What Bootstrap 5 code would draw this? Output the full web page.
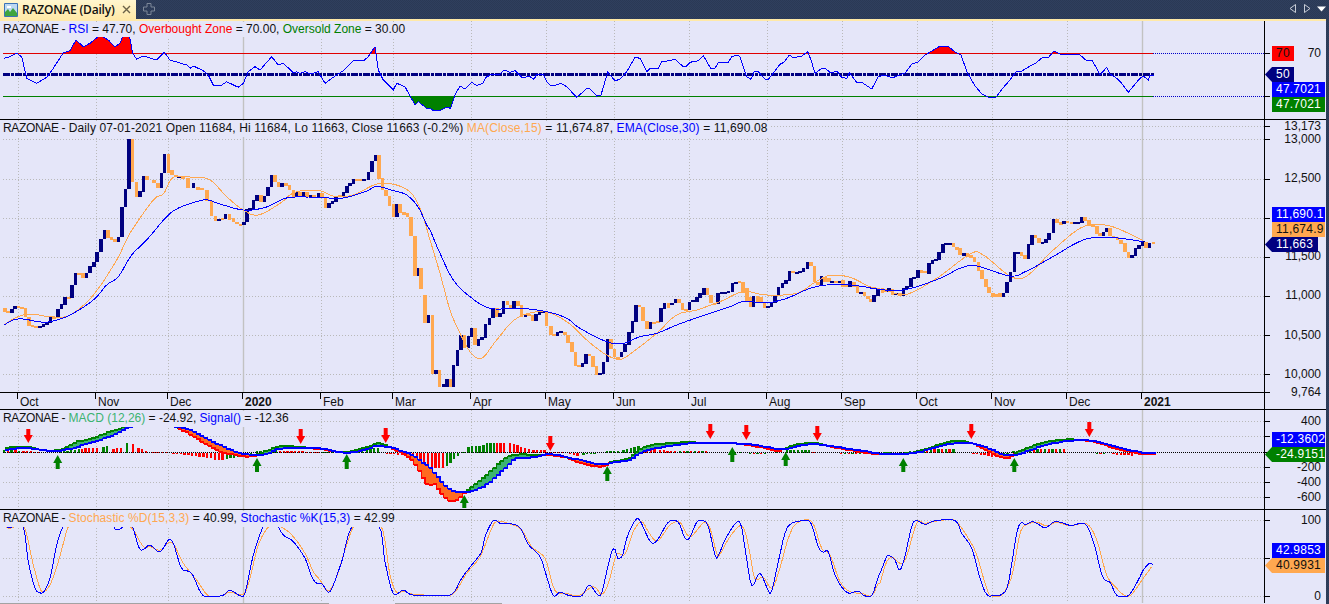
<!DOCTYPE html>
<html lang="en">
<head>
<meta charset="utf-8">
<title>RAZONAE (Daily)</title>
<link href="https://cdn.jsdelivr.net/npm/bootstrap@5.3.0/dist/css/bootstrap.min.css" rel="stylesheet">
<style>
html,body{height:604px;overflow:hidden;margin:0}
body{background:repeating-conic-gradient(#2f3f5e 0 25%,#2b3955 0 50%) 0 0/2px 2px;font-family:"Liberation Sans",Arial,sans-serif;font-size:12px;color:#111}
.topbar{height:19px}
.chart-tab{width:136px;background:linear-gradient(#fff6cf,#ffe9a8);color:#111;font:600 12px/19px "Open Sans",sans-serif;padding-left:4px}
.tab-name{margin-left:4px;margin-right:7px;letter-spacing:-.2px}
.add-tab{margin-left:7px;margin-top:3px}
.win-btns{margin-right:3px;gap:6px}
.cream{height:2px;background:#ffe9a8;width:1326px}
.stack{width:1326px;background:#e5e6f9}
.pane{border-bottom:1px solid #000}
.pane-rsi{height:99px}.pane-main{height:290px}.pane-macd{height:100px}.pane-stoch{height:93px;border-bottom:0}
.plot-col{width:1264px}
.plot-svg{display:block;width:1264px}
.axis-col{width:62px;border-left:1px solid #000}
.axis-ticks{position:absolute;left:0;top:0;width:61px;height:100%}
.legend-box{position:absolute;left:3px;top:1px;background:#e5e6f9;line-height:15px;height:16px;white-space:nowrap;padding-right:1px}
.pane-rsi .legend-box{height:15px}
.pane-main .legend-box{letter-spacing:.137px}
.pane-stoch .legend-box{letter-spacing:.066px}
.sym-name{letter-spacing:-.35px}
.c-blue{color:#0000ff}.c-red{color:#ff0000}.c-green{color:#008000}.c-orange{color:#ffa850}.c-sea{color:#3cb371}
.time-axis{height:17px;border-top:1px solid #000}
.month-tick{position:absolute;top:0;height:16px;line-height:18px;padding-left:2px}
.month-tick::before{content:"";position:absolute;left:-1px;top:0;height:6px;width:1px;background:#000}
.year-tick{font-weight:700}
.axis-label{position:absolute;right:5px;line-height:14px;height:14px;text-align:right;white-space:nowrap}
.val-tag{position:absolute;left:7px;width:53px;height:15px;line-height:15px;padding-left:4px;white-space:nowrap;letter-spacing:.22px}
.val-arrow{left:0;width:60px;padding-left:11px;clip-path:polygon(0 50%,7px 0,100% 0,100% 100%,7px 100%)}
.t-red{background:#ff0000;color:#111}.t-navy{background:#000080;color:#fff}.t-blue{background:#0000ff;color:#fff}
.t-green{background:#008000;color:#fff}.t-orange{background:#ffa850;color:#111}
.w-small{width:22px}.w-navy50{width:29px}.w-navy{width:53px}
.scroll-strip{height:1px;width:1326px;background:#e5e6f9}
.scroll-strip span{display:block;background:#a3a3a3}
.s1{width:329px}.s2{width:107px;margin-left:66px}
</style>
</head>
<body>
<div class="topbar d-flex align-items-start">
  <div class="chart-tab d-flex align-items-center">
    <svg width="14" height="14" viewBox="0 0 14 14"><rect width="14" height="14" rx="1" fill="#3b73b8"/><rect x="1" y="1" width="12" height="12" fill="#bcd8f2"/><path d="M3 3h4v2H3z" fill="#fff"/><path d="M1 13V9l3-3 2 3 3-4 4 5v3z" fill="#3fa53f"/></svg>
    <span class="tab-name">RAZONAE (Daily)</span>
    <svg width="9" height="9" viewBox="0 0 9 9"><path d="M1 1l7 7M8 1L1 8" stroke="#6b6248" stroke-width="1.4" fill="none"/></svg>
  </div>
  <svg class="add-tab" width="12" height="12" viewBox="0 0 12 12"><path d="M4 .5h4v3.5h3.5v4H8v3.5H4V8H.5V4H4z" fill="none" stroke="#7c8798" stroke-linejoin="round"/></svg>
  <div class="win-btns d-flex ms-auto align-items-center mt-1">
    <svg width="8" height="9" viewBox="0 0 8 9"><path d="M6.5.5v8L1 4.5z" fill="none" stroke="#c7ccd6"/></svg>
    <svg width="8" height="9" viewBox="0 0 8 9"><path d="M1.500.5v8L7 4.500z" fill="none" stroke="#c7ccd6"/></svg>
    <svg width="9" height="7" viewBox="0 0 9 7"><path d="M0 1.500h9L4.500 6.500z" fill="#fff"/></svg>
  </div>
</div>
<div class="cream"></div>
<div class="stack d-flex flex-column">
  <section class="pane pane-rsi d-flex">
    <div class="plot-col position-relative">
      <svg class="plot-svg" id="svgRsi" height="98" viewBox="0 21 1264 98"></svg>
      <div class="legend-box"><span class="sym-name">RAZONAE -</span> <span class="c-blue">RSI</span> = 47.70, <span class="c-red">Overbought Zone</span> = 70.00, <span class="c-green">Oversold Zone</span> = 30.00</div>
    </div>
    <div class="axis-col position-relative">
      <svg class="axis-ticks" data-ticks="53,96" data-top="21"></svg>
      <div class="val-tag t-red w-small" style="top:25px">70</div>
      <div class="axis-label" style="top:25px">70</div>
      <div class="val-tag val-arrow t-navy w-navy50" style="top:46px">50</div>
      <div class="val-tag t-blue" style="top:61px">47.7021</div>
      <div class="val-tag t-green" style="top:76px">47.7021</div>
    </div>
  </section>
  <section class="pane pane-main d-flex">
    <div class="plot-col position-relative d-flex flex-column">
      <svg class="plot-svg" id="svgMain" height="272" viewBox="0 120 1264 272"></svg>
      <div class="legend-box"><span class="sym-name">RAZONAE -</span> Daily 07-01-2021 Open 11684, Hi 11684, Lo 11663, Close 11663 (-0.2%) <span class="c-orange">MA(Close,15)</span> = 11,674.87, <span class="c-blue">EMA(Close,30)</span> = 11,690.08</div>
      <div class="time-axis position-relative">
        <span class="month-tick" style="left:18px">Oct</span><span class="month-tick" style="left:96px">Nov</span><span class="month-tick" style="left:168px">Dec</span><span class="month-tick year-tick" style="left:243px">2020</span><span class="month-tick" style="left:321px">Feb</span><span class="month-tick" style="left:393px">Mar</span><span class="month-tick" style="left:471px">Apr</span><span class="month-tick" style="left:546px">May</span><span class="month-tick" style="left:614px">Jun</span><span class="month-tick" style="left:689px">Jul</span><span class="month-tick" style="left:767px">Aug</span><span class="month-tick" style="left:842px">Sep</span><span class="month-tick" style="left:917px">Oct</span><span class="month-tick" style="left:992px">Nov</span><span class="month-tick" style="left:1067px">Dec</span><span class="month-tick year-tick" style="left:1142px">2021</span>
      </div>
    </div>
    <div class="axis-col position-relative">
      <svg class="axis-ticks" data-ticks="126,139,179,218,257,296,335,374,392" data-top="120"></svg>
      <div class="axis-label" style="top:-1px">13,173</div>
      <div class="axis-label" style="top:12px">13,000</div>
      <div class="axis-label" style="top:51px">12,500</div>
      <div class="axis-label" style="top:129px">11,500</div>
      <div class="axis-label" style="top:168px">11,000</div>
      <div class="axis-label" style="top:208px">10,500</div>
      <div class="axis-label" style="top:247px">10,000</div>
      <div class="axis-label" style="top:265px">9,764</div>
      <div class="val-tag t-blue" style="top:87px">11,690.1</div>
      <div class="val-tag t-orange" style="top:102px">11,674.9</div>
      <div class="val-tag val-arrow t-navy w-navy" style="top:117px">11,663</div>
    </div>
  </section>
  <section class="pane pane-macd d-flex">
    <div class="plot-col position-relative">
      <svg class="plot-svg" id="svgMacd" height="99" viewBox="0 410 1264 99"></svg>
      <div class="legend-box"><span class="sym-name">RAZONAE -</span> <span class="c-sea">MACD (12,26)</span> = -24.92, <span class="c-blue">Signal()</span> = -12.36</div>
    </div>
    <div class="axis-col position-relative">
      <svg class="axis-ticks" data-ticks="421,436,452,467,482,497" data-top="410"></svg>
      <div class="axis-label" style="top:4px">400</div>
      <div class="axis-label" style="top:50px">-200</div>
      <div class="axis-label" style="top:65px">-400</div>
      <div class="axis-label" style="top:80px">-600</div>
      <div class="val-tag t-blue" style="top:22px">-12.3602</div>
      <div class="val-tag val-arrow t-green" style="top:37px">-24.9151</div>
    </div>
  </section>
  <section class="pane pane-stoch d-flex">
    <div class="plot-col position-relative">
      <svg class="plot-svg" id="svgStoch" height="93" viewBox="0 510 1264 93"></svg>
      <div class="legend-box"><span class="sym-name">RAZONAE -</span> <span class="c-orange">Stochastic %D(15,3,3)</span> = 40.99, <span class="c-blue">Stochastic %K(15,3)</span> = 42.99</div>
    </div>
    <div class="axis-col position-relative">
      <svg class="axis-ticks" data-ticks="520,558,596" data-top="510"></svg>
      <div class="axis-label" style="top:3px">100</div>
      <div class="axis-label" style="top:79px">0</div>
      <div class="val-tag t-blue" style="top:33px">42.9853</div>
      <div class="val-tag val-arrow t-orange" style="top:48px">40.9931</div>
    </div>
  </section>
  <div class="scroll-strip d-flex"><span class="s1"></span><span class="s2"></span></div>
</div>
<script src="https://cdn.jsdelivr.net/npm/bootstrap@5.3.0/dist/js/bootstrap.bundle.min.js"></script>
<script>
const NAVY='#000080',ORANGE='#ffa850',BLUE='#0000ff';
const P=(s,ox,oy)=>s.trim().split(/\s+/).map(t=>{const[x,y]=t.split(',').map(Number);return[ox+x/3,oy+y/3]});
const path=p=>p.map(a=>a[0].toFixed(1)+','+a[1].toFixed(1)).join(' ');
const line=(p,c,w=1)=>`<polyline points="${path(p)}" fill="none" stroke="${c}" stroke-width="${w}" shape-rendering="crispEdges"/>`;
const smooth=(p,yMin=-1e9,yMax=1e9)=>{const out=[];for(let i=0;i<p.length-1;i++){const a=p[i-1]||p[i],b=p[i],c=p[i+1],d=p[i+2]||c;const n=Math.max(1,Math.ceil((c[0]-b[0])/2));
 for(let k=0;k<n;k++){const t=k/n,t2=t*t,t3=t2*t,f=j=>.5*(2*b[j]+(c[j]-a[j])*t+(2*a[j]-5*b[j]+4*c[j]-d[j])*t2+(3*b[j]-a[j]-3*c[j]+d[j])*t3);out.push([f(0),Math.min(yMax,Math.max(yMin,f(1)))])}}
 out.push(p[p.length-1]);return out};
const MONTHS=[18.5,96.5,168.5,321.5,393.5,471.5,546.5,614.5,689.5,767.5,842.5,917.5,992.5,1067.5];
function grid(yTop,yBot,hs){
  let o='';
  hs.forEach(y=>o+=`<line x1="3" x2="1264" y1="${y+.5}" y2="${y+.5}" stroke="#b9b9b9" stroke-dasharray="1 2"/>`);
  MONTHS.forEach(x=>o+=`<line x1="${x}" x2="${x}" y1="${yTop}" y2="${yBot}" stroke="#b9b9b9" stroke-dasharray="1 2"/>`);
  [243.5,1142.5].forEach(x=>o+=`<line x1="${x}" x2="${x}" y1="${yTop}" y2="${yBot}" stroke="#c2c2c2" stroke-width="1.4"/>`);
  return o;
}
/* RSI */
const rsi=[...P(`12,175 30,170 50,160 65,170 80,235 110,250 140,232 160,205 190,158 210,152 228,120 250,140 270,130 300,105 325,120 345,140 360,130 370,105 388,105 398,160 410,178 430,168 470,180 493,157 510,180 560,195 570,205 580,198 610,212 625,225 640,255 665,255 680,245 715,262 730,250 745,215 765,200 780,210 815,170 835,195 850,190 880,218 890,215 900,220 915,215 930,222 955,215 975,250 1000,232 1030,212 1060,182 1090,183 1105,170 1125,140 1135,210 1150,240 1180,270 1190,250 1215,260 1245,315 1255,305 1280,325`,0,0),
...P(`0,265 10,272 30,272 50,262 62,265 75,225 90,198 105,207 125,187 140,197 158,190 168,172 185,163 210,163 222,150 240,157 255,152 275,172 300,170 312,178 320,163 340,163 350,185 362,197 375,196 392,190 410,200 440,232 460,215 470,205 480,207 500,228 513,225 533,157 555,182 570,178 590,155 615,112 630,115 650,155 660,145 685,145 695,125 712,123 735,118 760,140 770,138 780,127 805,122 820,107 842,145 855,145 865,127 895,127 905,110 920,105 930,110 950,170 963,178 972,155 985,155 1005,178 1015,178 1030,160 1050,133 1062,127 1078,105 1090,113 1115,108 1133,95 1143,120 1155,160 1175,145 1185,145 1200,157 1222,155 1235,172 1250,175 1258,158 1280,187 1295,187 1325,207 1345,170`,430,20),
[885,75],[892,78],[905,73],[912,64],[918,62],[925,55],[932,51],[940,46],[948,46],[955,52],[961,55],[967,72],[975,86],[982,94],[988,97],[996,97],[1003,88],[1010,80],[1016,72],[1022,71],[1030,66],[1036,63],[1043,57],[1048,58],[1054,51],[1060,54],[1066,55],[1073,54],[1080,55],[1087,61],[1092,60],[1098,71],
...P(`0,225 20,202 30,222 50,235 65,250 85,277 120,235 130,228 145,240 150,225 162,226`,1100,0)];
const x0=rsi[0][0],xn=rsi[rsi.length-1][0];
svgRsi.innerHTML=`<defs><clipPath id="cTop"><rect x="0" y="0" width="1264" height="53"/></clipPath><clipPath id="cBot"><rect x="0" y="97" width="1264" height="60"/></clipPath></defs>`
+grid(21,119,[])
+`<polygon clip-path="url(#cTop)" fill="#ff0000" points="${path(rsi)} ${xn},200 ${x0},200"/>`
+`<polygon clip-path="url(#cBot)" fill="#008000" points="${path(rsi)} ${xn},-50 ${x0},-50"/>`
+`<line x1="3" x2="1153" y1="53.5" y2="53.5" stroke="#e00000"/><line x1="1153" x2="1264" y1="53.5" y2="53.5" stroke="#0000c8" stroke-dasharray="1 1"/>`
+`<line x1="3" x2="1153" y1="96.5" y2="96.5" stroke="#008000"/><line x1="1153" x2="1264" y1="96.5" y2="96.5" stroke="#0000c8" stroke-dasharray="1 1"/>`
+`<line x1="3" x2="1154" y1="74.5" y2="74.5" stroke="${NAVY}" stroke-width="3" stroke-dasharray="7 1 3 1"/>`
+line(rsi,BLUE);
/* Candles */
const CANDLES=[[0,120,`15,565,575,o 24,573,578,o 35,567,578,b 44,558,568,b 55,558,565,o 65,560,567,o 76,565,592,o 86,592,617,o 97,615,620,o 108,618,623,o 119,618,623,b 130,612,620,b 141,607,614,b 151,590,610,b 162,590,593,o 173,567,590,b 184,552,567,b 195,530,555,b 206,530,533,o 215,495,533,b 226,460,495,b 237,460,463,o 248,460,473,o 259,460,473,b 270,438,460,b 281,427,440,b 291,397,427,b 302,358,397,b 313,330,358,b 323,330,355,o 334,352,360,o 345,358,365,o 355,352,365,b 365,262,352,b 376,207,262,b 387,57,207,b 397,57,187,o 409,187,230,o 419,213,230,b 430,168,215,b 441,168,180,o 462,180,190,o 473,190,203,o 484,160,203,b 493,102,160,b 505,102,160,o 516,150,165,o 527,165,170,o 537,167,172,b 548,170,178,o 564,175,205,o 580,190,205,b 594,200,210,o 605,205,210,o 621,210,243,o 634,243,288,o 646,288,303,o 656,297,302,b 667,295,298,o 676,283,298,b 688,283,300,o 700,295,305,o 711,305,312,o 721,312,316,o 731,305,315,b 740,268,305,b 750,265,270,b 760,240,268,b 771,225,242,b 782,225,245,o 793,228,245,b 804,200,228,b 814,165,200,b 825,165,187,o 835,185,200,o 846,190,200,b 857,190,198,o 868,196,210,o 880,210,232,o 890,215,232,b 900,215,232,o 910,215,232,b 920,215,232,o 931,225,232,b 942,225,232,o 955,220,232,b 965,220,232,o 976,232,263,o 987,250,263,b 997,243,252,b 1008,228,245,b 1020,226,229,o 1030,217,228,b 1040,197,218,b 1050,190,198,b 1060,178,192,b 1070,178,181,o 1082,178,181,o 1092,178,182,b 1105,155,180,b 1115,123,155,b 1126,105,123,b 1136,105,178,o 1147,175,210,o 1158,210,228,o 1168,228,258,o 1180,253,290,o 1190,253,290,b 1200,253,278,o 1212,275,285,o 1222,278,290,o 1233,290,347,o 1244,347,467,o 1255,445,467,b`],
[420,230,`3,115,178,o 15,195,278,o 25,255,278,b 37,255,433,o 47,420,433,b 58,420,472,o 70,463,472,b 80,448,470,b 91,448,472,o 100,405,472,b 112,360,407,b 122,315,360,b 133,315,355,o 145,318,355,b 155,295,320,b 165,295,345,o 175,328,347,b 186,322,330,b 196,283,325,b 208,265,285,b 219,235,265,b 230,235,260,o 240,250,260,b 250,212,252,b 262,212,225,o 272,225,237,o 282,212,237,b 293,212,227,o 304,225,260,o 316,252,260,b 326,252,255,o 337,255,272,o 347,252,272,b 358,245,255,b 368,242,247,b 379,245,287,o 392,287,315,o 402,313,316,o 412,305,317,b 423,303,306,b 434,305,315,o 444,315,338,o 455,335,367,o 466,367,407,o 477,405,410,o 487,400,410,b 497,373,402,b 508,373,378,o 518,378,410,o 529,408,434,o 540,430,434,b 550,397,432,b 562,328,397,b 572,328,358,o 583,358,382,o 594,380,383,o 604,365,382,b 615,342,367,b 626,307,345,b 637,273,308,b 647,226,275,b 658,226,230,o 668,230,272,o 680,272,298,o 691,275,298,b 702,275,278,o 713,273,277,o 722,235,275,b 733,220,237,b 745,220,233,o 755,218,225,b 766,208,220,b 777,208,220,o 787,220,240,o 798,237,240,o 808,215,240,b 819,210,217,b 830,202,217,b 840,190,205,b 851,173,195,b 862,173,195,o 873,195,220,o 883,218,220,o 893,190,222,b 904,187,192,b 915,185,188,b 925,184,187,b 937,160,187,b 947,155,160,b 958,153,155,o 969,155,190,o 980,175,217,o 991,200,230,o 1000,198,230,b 1012,198,215,o 1022,200,217,o 1033,215,233,o 1043,228,233,b 1054,218,230,b 1064,197,220,b 1075,172,197,b 1087,160,173,b 1098,150,163,b 1108,123,152,b 1118,123,130,o 1130,125,130,b 1140,123,128,b 1150,115,125,b 1162,97,117,b 1172,97,107,o 1183,107,155,o 1193,155,165,o 1204,138,165,b 1215,140,155,o 1226,145,155,o 1236,152,155,b 1248,152,155,o 1258,152,155,b 1268,150,172,o 1279,165,172,o 1290,153,172,b 1301,155,172,o 1312,168,190,o 1322,187,189,b 1333,187,198,o 1344,198,208,o`],
[870,200,`3,297,305,o 12,285,305,b 24,265,287,b 37,265,278,o 46,267,275,o 57,265,275,b 67,268,285,o 78,278,285,b 89,278,287,o 100,265,287,b 111,258,267,b 122,235,260,b 132,232,237,b 143,210,235,b 154,210,218,o 165,213,220,o 176,190,222,b 187,180,192,b 197,178,183,b 207,157,180,b 218,132,158,b 228,130,133,b 240,129,131,b 250,130,140,o 260,140,150,o 270,145,165,o 282,160,167,b 292,160,172,o 303,165,175,o 313,172,187,o 325,185,212,o 335,210,238,o 347,238,262,o 357,260,280,o 368,278,290,o 378,282,290,o 389,280,292,o 400,278,292,b 411,245,280,b 421,215,245,b 433,157,215,b 443,157,160,b 454,157,168,o 464,165,177,o 475,133,177,b 485,105,135,b 496,105,115,o 507,115,130,o 517,125,130,b 527,118,130,b 537,100,120,b 550,57,100,b 560,57,68,o 572,65,75,o 582,62,72,b 592,62,70,o 604,65,70,o 615,66,69,b 625,67,69,b 635,52,68,b 645,52,62,o 656,60,78,o 668,72,82,o 680,78,102,o 690,98,107,o 700,95,107,b 710,85,97,b 720,85,108,o 730,108,115,o 742,110,120,o 753,120,132,o 764,130,155,o 775,155,173,o 785,165,173,b 796,145,167,b 807,135,147,b 818,122,137,b 828,125,143,o 838,130,143,b 850,127,133,o`]];
let cHtml='';
CANDLES.forEach(([ox,oy,s])=>s.trim().split(/\s+/).forEach(t=>{const a=t.split(','),x=ox+ +a[0]/3,y=oy+ +a[1]/3,h=Math.max(2,(a[2]-a[1])/3);
 cHtml+=`<rect x="${(x-1.8).toFixed(1)}" y="${y.toFixed(1)}" width="3.6" height="${h.toFixed(1)}" fill="${a[3]=='o'?ORANGE:NAVY}" shape-rendering="crispEdges"/>`}));
const ema=[...P(`12,615 40,600 70,597 115,605 150,605 210,585 280,540 320,495 355,470 395,405 440,360 500,290 540,262 600,242 625,240 660,252 730,270 790,264 830,247 870,232 960,232 1000,235 1040,232 1100,213 1130,199 1180,212 1220,225 1255,262 1280,315`,0,120),
...P(`30,0 60,70 100,150 150,200 210,235 300,235 380,245 440,265 480,295 560,335 610,340 660,320 710,310 770,285 840,260 930,230 970,215 1040,218 1100,205 1180,172 1260,163 1344,172`,420,230),
...P(`10,266 100,270 210,235 270,205 320,198 420,228 470,213 540,175 640,120 720,112 820,125`,870,200)];
const ma=[...P(`12,615 50,592 90,582 150,590 210,585 280,525 350,420 390,340 460,240 490,222 520,172 580,172 630,180 680,230 730,270 775,285 840,250 870,225 900,213 960,212 1000,228 1060,225 1140,190 1220,208 1260,265`,0,120),
...P(`30,30 60,130 90,240 120,310 150,365 185,385 230,330 290,265 370,245 440,275 500,330 555,372 600,388 640,365 710,310 770,255 830,240 900,215 970,185 1040,195 1130,190 1180,160 1230,136 1290,142 1344,168`,420,230),
...P(`10,262 50,272 110,283 200,235 300,162 340,165 420,228 470,228 550,150 640,80 720,78 820,122`,870,200)];
svgMain.innerHTML=grid(120,392,[126,139,179,218,257,296,335,374])+cHtml+line(smooth(ma),ORANGE)+line(smooth(ema),BLUE);
/* MACD */
const interp=(pts,x)=>{if(x<=pts[0][0])return pts[0][1];for(let i=1;i<pts.length;i++)if(x<=pts[i][0]){const[a,b]=pts[i-1],[c,d]=pts[i];return c===a?d:b+(d-b)*(x-a)/(c-a)}return pts[pts.length-1][1]};
const sig=smooth([...P(`12,135 60,128 100,132 135,137 170,137 210,130 270,112 330,92 380,68 420,50 465,35 510,62 560,72 600,92 650,118 700,140 730,147 770,150 800,145 830,132 880,128 950,130 1020,142 1060,140 1100,130 1130,122 1180,132 1230,150 1280,185`,0,405),
...P(`0,195 30,230 60,258 100,262 130,255 170,235 220,190 250,162 300,157 350,148 400,155 450,167 510,178 540,172 590,165 640,138 700,125 770,115 830,115 900,115 950,118 1000,125 1040,133 1080,128 1140,117 1200,124 1260,133 1340,145`,430,405),
...P(`10,147 60,147 110,142 170,125 220,115 270,115 320,130 370,150 410,147 460,130 530,112 600,105 650,112 700,125 780,143 820,145`,880,405)]);
const mac=smooth([...P(`12,128 60,125 100,130 135,137 180,133 220,112 270,100 310,85 350,72 400,55 420,50 465,30 510,60 560,85 600,110 650,138 700,150 740,155 770,148 800,135 830,125 880,125 950,132 1020,142 1060,135 1100,125 1130,115 1180,135 1230,165 1280,245`,0,405),
...P(`0,230 30,268 55,288 75,285 100,262 130,238 170,205 220,160 260,148 300,150 350,150 400,157 450,175 510,185 540,170 590,160 640,125 700,115 770,112 830,115 900,115 950,120 1000,130 1040,137 1080,123 1140,113 1200,126 1260,137 1340,148`,430,405),
...P(`10,145 60,147 110,137 170,120 220,107 270,115 320,140 370,160 410,140 460,120 530,105 600,105 650,115 700,130 780,147 820,147`,880,405)]);
const HIST=[[0,12,60,8,6,'m'],[0,70,125,4,2,'r'],[0,180,240,3,10,'g'],[0,245,300,12,13,'r'],[0,310,330,18,20,'g'],[0,340,370,12,15,'r'],[0,380,390,28,28,'g'],[0,398,404,25,25,'r'],[0,415,440,15,5,'r'],[0,455,500,2,1,'r'],[0,520,640,-3,-18,'r'],[0,645,670,-22,-22,'r'],[0,680,720,-20,-12,'g'],[0,730,760,-6,-3,'g'],[0,770,830,5,10,'g'],[0,840,960,5,2,'r'],[0,965,1030,2,2,'g'],[0,1040,1090,5,8,'g'],[0,1100,1140,10,15,'g'],[0,1160,1240,-3,-12,'r'],[0,1250,1285,-25,-45,'r'],
[430,5,45,-45,-45,'r'],[430,50,85,-40,-10,'g'],[430,100,104,3,3,'g'],[430,115,160,18,22,'g'],[430,170,195,28,28,'g'],[430,200,230,30,30,'r'],[430,240,300,28,10,'r'],[430,310,345,8,8,'r'],[430,350,400,2,2,'r'],[430,420,450,-5,-12,'r'],[430,460,500,-6,-3,'g'],[430,530,570,5,5,'g'],[430,580,630,8,22,'g'],[430,640,680,18,10,'r'],[430,690,740,7,5,'r'],[430,750,830,4,5,'m'],[430,930,934,3,3,'g'],[430,960,1015,-4,-6,'m'],[430,1040,1044,3,3,'g'],[430,1070,1140,8,8,'g'],[430,1150,1154,3,3,'r'],[430,1200,1340,-2,-6,'m'],
[880,60,90,2,2,'g'],[880,90,130,5,5,'g'],[880,130,230,10,10,'m'],[880,280,350,-3,-15,'r'],[880,360,390,-12,-12,'g'],[880,400,430,5,5,'g'],[880,450,560,12,12,'m'],[880,650,680,-3,-3,'m'],[880,700,760,-5,-10,'r'],[880,770,810,-5,-5,'r']];
let hh='';
HIST.forEach(([ox,a,b,h1,h2,c])=>{const xa=ox+a/3,xb=ox+b/3;let i=0;for(let x=xa;x<=xb;x+=3.75,i++){const t=xb>xa?(x-xa)/(xb-xa):0,v=(h1+(h2-h1)*t)/3;
 const col=c=='m'?(i%2?'#ff0000':'#008000'):(c=='r'?'#ff0000':'#008000');
 hh+=`<rect x="${(x-1.2).toFixed(1)}" y="${(v>0?452.5-v:452.5).toFixed(1)}" width="2.4" height="${Math.abs(v).toFixed(1)}" fill="${col}" shape-rendering="crispEdges"/>`}});
let cloud='',ls='',lb='';
const step=3.75;
for(let x=5;x<1153;x+=step){const s=Math.round(interp(sig,x)),m=Math.round(interp(mac,x)),up=m<=s,t=Math.min(s,m),h=Math.abs(s-m);
 const s2=Math.round(interp(sig,x+step)),m2=Math.round(interp(mac,x+step));
 if(h)cloud+=`<rect x="${x.toFixed(2)}" y="${t}" width="3.9" height="${h}" fill="${up?'#3cb371':'#ff6a20'}" shape-rendering="crispEdges"/>`;
 const nx=(x+step).toFixed(2);
 ls+=`<path d="M${x.toFixed(2)} ${m}H${nx}V${x+step<1153?m2:m}" fill="none" stroke="${up?'#008000':'#ff0000'}" stroke-width="1.4" shape-rendering="crispEdges"/>`;
 lb+=`<path d="M${x.toFixed(2)} ${s}H${nx}V${x+step<1153?s2:s}" fill="none" stroke="${BLUE}" stroke-width="1.4" shape-rendering="crispEdges"/>`;}
const arrow=(x,y1,y2,up)=>{const H=up?y1:y2,d=up?1:-1,n=8;
 const c=`M${x} ${H}L${x+4.5} ${H+d*n}H${x+2}V${up?y2:y1}H${x-2}V${H+d*n}H${x-4.5}Z`;return `<path d="${c}" fill="${up?'#008000':'#ff0000'}"/>`};
const ARR=[[28.3,429,443,0],[57.7,455,469,1],[257,458,472,1],[300.7,429,444,0],[346.7,454,469,1],[385.7,428,443,0],[464.3,495,508,1],[550.3,436,451,0],[607.3,466,481,1],[710.3,424,439,0],[732.3,447,462,1],[746.3,425,440,0],[785.7,452,466,1],[817.3,426,441,0],[903.3,458,472,1],[971.3,424,439,0],[1014.3,458,472,1],[1089.3,422,437,0]];
svgMacd.innerHTML=grid(410,509,[421,436,467,482,497])+hh+`<line x1="3" x2="1264" y1="452.5" y2="452.5" stroke="#000" stroke-dasharray="1 1"/>`+cloud+ls+lb+ARR.map(a=>arrow(a[0],a[1],a[2],a[3])).join('');
/* Stochastic */
const kk=[...P(`15,63 30,68 45,63 70,63 85,170 105,250 118,262 130,262 150,220 170,120 190,60 205,20 330,20 340,63 352,75 375,63 395,60 418,130 435,130 450,120 475,140 490,130 505,105 520,115 545,190 575,205 610,272 665,272 685,258 700,260 720,272 735,265 760,150 790,65 810,60 830,60 850,90 880,110 915,160 935,215 950,235 965,235 985,262 1000,240 1025,170 1060,60 1135,60 1155,170 1180,265 1210,255 1240,270 1345,272`,0,505),
...P(`0,270 15,258 35,220 65,180 95,140 105,95 130,47 150,55 175,55 210,68 235,118 270,155 290,215 310,272 330,262 360,272 395,272 418,240 450,272 470,200 485,140 495,133 503,160 518,150 530,100 555,47 570,47 600,108 620,108 655,52 685,52 705,100 720,97 740,52 760,47 775,65 795,150 805,152 830,95 868,50 885,130 900,225 910,240 930,205 955,258 965,258 985,170 1005,85 1025,55 1070,47 1085,60 1105,125 1120,142 1135,140 1155,210 1190,262 1225,258 1240,270 1265,272 1285,215`,450,505),
...P(`0,205 20,155 28,152 45,165 58,195 72,165 95,65 110,47 135,58 165,47 225,47 245,85 275,130 300,220 320,268 340,272 365,268 385,235 410,85 425,52 435,60 460,50 495,68 525,50 560,58 575,62 615,57 640,110 668,215 690,232 712,272 745,272 775,225 790,195 808,175 818,178`,880,505)];
const dd=[...P(`15,65 30,70 45,65 72,63 100,180 120,250 130,260 150,240 175,170 205,65 230,45 330,45 345,65 380,63 400,75 430,125 450,125 480,135 515,112 550,175 590,225 625,272 665,272 690,262 730,268 750,220 775,120 810,62 850,70 880,95 915,145 940,200 960,225 985,258 1010,215 1040,120 1070,55 1140,55 1170,210 1190,262 1210,258 1240,268 1345,272`,0,505),
...P(`0,272 20,255 50,205 90,155 125,70 140,50 175,55 215,75 245,125 285,160 305,230 320,262 350,265 385,272 430,245 455,268 475,235 495,160 505,145 525,148 550,80 575,50 595,80 622,108 660,60 690,52 720,95 770,52 800,145 810,147 840,95 875,62 895,120 910,205 920,225 940,217 965,250 985,205 1015,100 1040,55 1085,50 1115,130 1140,150 1170,230 1200,260 1235,265 1265,272 1285,235`,450,505),
...P(`0,235 20,170 40,158 60,175 78,160 110,55 135,55 180,47 225,47 265,100 290,150 320,250 335,272 365,270 395,215 415,110 430,65 470,52 500,63 530,52 570,62 620,57 650,105 680,210 710,250 735,272 755,268 790,220 815,185`,880,505)];
svgStoch.innerHTML=grid(510,603,[520,558,596])+line(smooth(dd,515,596.5),ORANGE)+line(smooth(kk,515,596.5),BLUE);
/* Axis ticks */
document.querySelectorAll('.axis-ticks').forEach(s=>{const top=+s.dataset.top;s.innerHTML=s.dataset.ticks.split(',').map(y=>`<line x1="0" x2="5" y1="${y-top+.5}" y2="${y-top+.5}" stroke="#000"/>`).join('')});
</script>
</body>
</html>
